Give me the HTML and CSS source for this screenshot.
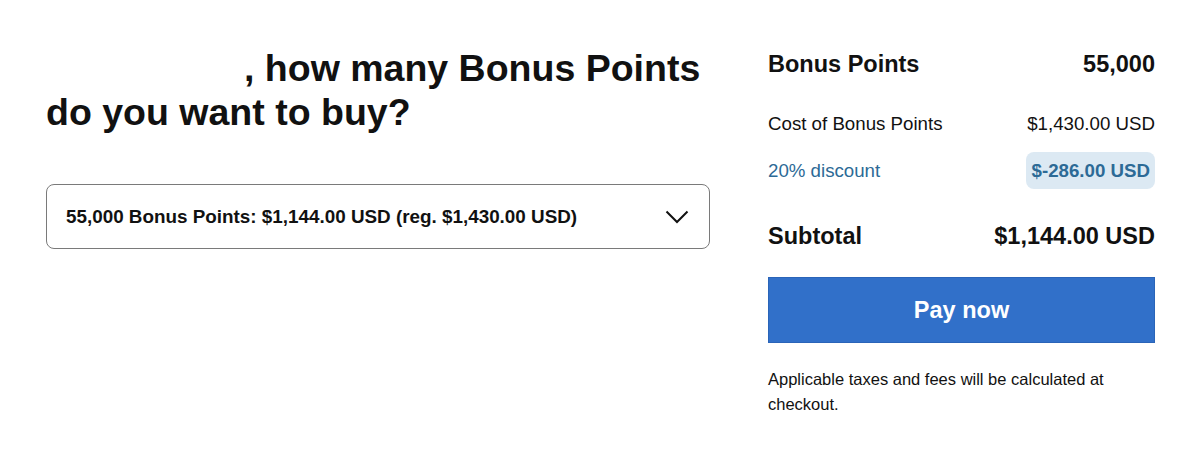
FILE: index.html
```html
<!DOCTYPE html>
<html lang="en">
<head>
<meta charset="utf-8">
<title>Buy Bonus Points</title>
<link rel="stylesheet" href="styles.css">
</head>
<body>
<div class="page">
  <section class="chooser">
    <h1 class="title"><span class="name" aria-hidden="true"></span>, how many Bonus Points do you want to buy?</h1>
    <div class="select">
      <span class="select-text">55,000 Bonus Points: $1,144.00 USD (reg. $1,430.00 USD)</span>
      <svg class="chev" width="24" height="14" viewBox="0 0 24 14" aria-hidden="true"><path d="M1.5 1.5 L12 12 L22.5 1.5" fill="none" stroke="#111" stroke-width="2"/></svg>
    </div>
  </section>
  <aside class="summary">
    <div class="row head"><span>Bonus Points</span><span>55,000</span></div>
    <div class="row cost"><span>Cost of Bonus Points</span><span>$1,430.00 USD</span></div>
    <div class="row disc"><span>20% discount</span><span class="badge">$-286.00 USD</span></div>
    <div class="row sub"><span>Subtotal</span><span>$1,144.00 USD</span></div>
    <button class="pay">Pay now</button>
    <p class="note">Applicable taxes and fees will be calculated at checkout.</p>
  </aside>
</div>
</body>
</html>
```
FILE: styles.css
```css
* { box-sizing: border-box; }
body {
  margin: 0;
  background: #fff;
  color: #111;
  font-family: "Liberation Sans", Arial, sans-serif;
}
.page {
  display: flex;
  padding: 46px 45px 0 46px;
  gap: 58px;
}
.chooser {
  width: 664px;
  flex: none;
}
.title {
  margin: 0;
  font-size: 37.5px;
  line-height: 44px;
  font-weight: 700;
  color: #111;
}
.name {
  display: inline-block;
  width: 198px;
  height: 1px;
}
.select {
  margin-top: 50px;
  height: 65px;
  border: 1px solid #7a7a7a;
  border-radius: 8px;
  display: flex;
  align-items: center;
  justify-content: space-between;
  padding: 0 20px 0 19px;
}
.select-text {
  font-size: 18.85px;
  font-weight: 700;
}
.chev { display: block; }
.summary {
  flex: 1;
  display: flex;
  flex-direction: column;
}
.row {
  display: flex;
  justify-content: space-between;
  align-items: center;
}
.head {
  font-size: 23.5px;
  font-weight: 700;
  height: 36px;
}
.cost {
  margin-top: 29px;
  font-size: 18.7px;
  height: 26px;
}
.disc {
  margin-top: 15px;
  font-size: 18.7px;
  color: #2c6a96;
  height: 37px;
}
.badge {
  background: #dce9f3;
  border-radius: 8px;
  padding: 0 5px 0 6px;
  height: 37px;
  line-height: 37px;
  font-weight: 700;
}
.sub {
  margin-top: 31px;
  font-size: 23.5px;
  font-weight: 700;
  height: 32px;
}
.pay {
  margin-top: 25px;
  height: 66px;
  border: 1px solid #2a64b8;
  background: #3170c9;
  color: #fff;
  font-family: inherit;
  font-size: 23.5px;
  font-weight: 700;
}
.note {
  margin: 24px 0 0;
  font-size: 16.5px;
  line-height: 25px;
  padding-right: 40px;
}
```
